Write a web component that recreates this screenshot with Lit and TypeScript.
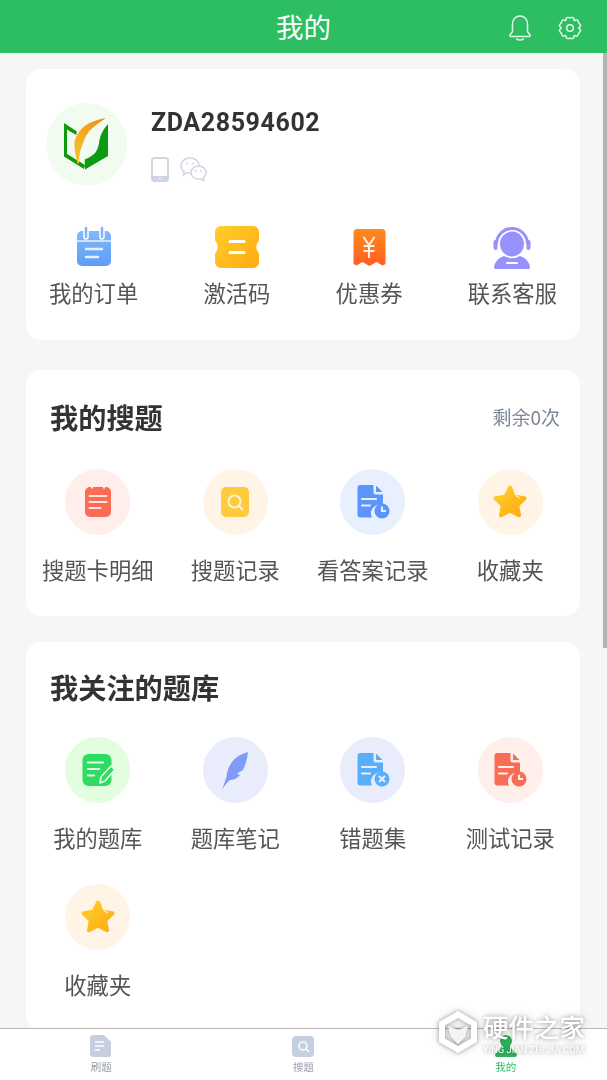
import { LitElement, html, css, svg } from "lit";
import { customElement } from "lit/decorators.js";

const defs = svg`
<defs>
  <linearGradient id="gBlue" x1="0" y1="0" x2="0" y2="1"><stop offset="0" stop-color="#82b8fc"/><stop offset="1" stop-color="#5d9df8"/></linearGradient>
  <linearGradient id="gYel" x1="0" y1="0" x2="1" y2="1"><stop offset="0" stop-color="#ffcf2c"/><stop offset="1" stop-color="#ffaa12"/></linearGradient>
  <linearGradient id="gOr" x1="0" y1="0" x2="0" y2="1"><stop offset="0" stop-color="#ff8a1f"/><stop offset="1" stop-color="#ff5f22"/></linearGradient>
  <linearGradient id="gLeaf" x1="1" y1="0" x2="0" y2="1"><stop offset="0" stop-color="#f08a16"/><stop offset="1" stop-color="#f8c52c"/></linearGradient>
</defs>`;

function gearPath(cx: number, cy: number, rOuter: number, rValley: number): string {
  let d = "";
  for (let i = 0; i < 6; i++) {
    const valley = ((-120 + i * 60) * Math.PI) / 180;
    const tip = ((-90 + i * 60) * Math.PI) / 180;
    const next = ((-60 + i * 60) * Math.PI) / 180;
    const p = (a: number, r: number) => `${(cx + r * Math.cos(a)).toFixed(2)} ${(cy + r * Math.sin(a)).toFixed(2)}`;
    if (i === 0) d += `M${p(valley, rValley)}`;
    d += `C${p(valley + 0.2, rOuter + 1)} ${p(tip - 0.35, rOuter + 1.5)} ${p(tip, rOuter)}`;
    d += `C${p(tip + 0.35, rOuter + 1.5)} ${p(next - 0.2, rOuter + 1)} ${p(next, rValley)}`;
  }
  return d + "z";
}

const ICONS: Record<string, unknown> = {
  order: svg`<svg width="46" height="44" viewBox="0 0 46 44"><rect x="6" y="6" width="34" height="35" rx="5" fill="url(#gBlue)"/>
    <path d="M6 16h34" stroke="#fff" stroke-width="1.5" opacity=".85"/>
    <path d="M15 3v9M31 3v9" stroke="#fff" stroke-width="5.5" stroke-linecap="round"/><path d="M15 3v9M31 3v9" stroke="#7db3fb" stroke-width="2.5" stroke-linecap="round"/>
    <path d="M15 24h16M15 32h12" stroke="#fff" stroke-width="2.4" stroke-linecap="round" opacity=".85"/></svg>`,
  ticket: svg`<svg width="46" height="44" viewBox="0 0 46 44"><path d="M7 1h32a6 6 0 0 1 6 6v8.5q-5.5 6.5 0 13V37a6 6 0 0 1-6 6H7a6 6 0 0 1-6-6v-8.500q5.500-6.500 0-13V7a6 6 0 0 1 6-6z" fill="url(#gYel)"/>
    <path d="M16 16.500h14M16 27.500h14" stroke="#fff" stroke-width="3" stroke-linecap="round"/></svg>`,
  coupon: svg`<svg width="46" height="44" viewBox="0 0 46 44"><path d="M10 4h26a3.500 3.500 0 0 1 3.500 3.500V39l-3 1.500-6-3.500-7 4-7-4-6 3.500-3-1.500V7.500A3.500 3.500 0 0 1 10 4z" fill="url(#gOr)"/>
    <path d="M17.500 12l5.500 8 5.500-8M23 20v13M17.500 21h11M17.500 26h11" stroke="#fff" stroke-width="2" fill="none" opacity=".9"/></svg>`,
  agent: svg`<svg width="46" height="44" viewBox="0 0 46 44">
    <path d="M7.500 19a15.500 15.500 0 0 1 31 0" fill="none" stroke="#9890fd" stroke-width="3"/>
    <rect x="4.500" y="15" width="4" height="10" rx="2" fill="#9890fd"/><rect x="37.500" y="15" width="4" height="10" rx="2" fill="#9890fd"/>
    <ellipse cx="23" cy="19" rx="12" ry="12.500" fill="#9890fd"/>
    <path d="M15 31q8 4.500 16 0q9 3 10 11.500q0 1.500-2 1.500H7q-2 0-2-1.500Q6 34 15 31z" fill="#9890fd"/>
    <path d="M18 38h10" stroke="#fff" stroke-width="2.200" stroke-linecap="round"/></svg>`,
  notebook: svg`<svg width="44" height="44" viewBox="0 0 44 44"><rect x="9" y="7" width="26" height="30" rx="5" fill="#fc6b56"/>
    <path d="M16 5.500v3M28 5.500v3" stroke="#ffeee9" stroke-width="2"/>
    <path d="M13.500 16h17M13.500 22h17M13.500 28h11" stroke="#ffe3dc" stroke-width="2" stroke-linecap="round"/></svg>`,
  search: svg`<svg width="44" height="44" viewBox="0 0 44 44"><rect x="8" y="7" width="28" height="30" rx="5" fill="#ffcb3e"/>
    <circle cx="21.500" cy="21.500" r="6" fill="none" stroke="#fff3cf" stroke-width="2"/><path d="M26 26l3.500 3.500" stroke="#fff3cf" stroke-width="2" stroke-linecap="round"/></svg>`,
  fileClock: svg`<svg width="44" height="44" viewBox="0 0 44 44"><path d="M9.500 5h13v7.500a2 2 0 0 0 2 2H32V25a9 9 0 0 0-11 12.500H9.500a3 3 0 0 1-3-3V8a3 3 0 0 1 3-3zM25 5.500l6.500 6.500H25z" fill="#5b94fb"/>
    <path d="M11 19h14M11 25.500h8" stroke="#e8effe" stroke-width="2.200" stroke-linecap="round"/>
    <circle cx="31" cy="31" r="7.500" fill="#5b94fb"/><path d="M31 26.500V31h4" stroke="#e8effe" stroke-width="2" fill="none"/></svg>`,
  star: svg`<svg width="44" height="44" viewBox="0 0 44 44"><path d="M22 7.500l4.500 9.300 10 1.400-7.300 7.100 1.800 10L22 30.600l-9 4.700 1.800-10-7.300-7.100 10-1.400z" fill="url(#gYel)" stroke="url(#gYel)" stroke-width="4" stroke-linejoin="round"/>
    <path d="M26 11q1 5 6 7" stroke="#fff3d5" stroke-width="1.200" fill="none"/></svg>`,
  note: svg`<svg width="44" height="44" viewBox="0 0 44 44"><rect x="6.500" y="6" width="29" height="32" rx="6" fill="#2fdc63"/>
    <path d="M12 14.500h15M12 21h11M12 27.500h6" stroke="#e2fde0" stroke-width="2.200" stroke-linecap="round"/>
    <path d="M24 35l1-6 10-11 4 3.500-10 11.500z" fill="#2fdc63" stroke="#e2fde0" stroke-width="1.700" stroke-linejoin="round"/></svg>`,
  feather: svg`<svg width="44" height="44" viewBox="0 0 44 44"><path d="M35 4Q24 7 19 14q-5 7-5.500 15L9 42q4-7 8-10 6 0 10-5l-3-1.500 6-3.500q4-8 5-18z" fill="#7f9af7"/></svg>`,
  fileX: svg`<svg width="44" height="44" viewBox="0 0 44 44"><path d="M9.500 5h13v7.500a2 2 0 0 0 2 2H32V25a9 9 0 0 0-11 12.500H9.500a3 3 0 0 1-3-3V8a3 3 0 0 1 3-3zM25 5.500l6.500 6.500H25z" fill="#58aefa"/>
    <path d="M11 19h14M11 25.500h8" stroke="#e9edfb" stroke-width="2.200" stroke-linecap="round"/>
    <circle cx="31" cy="31" r="7.500" fill="#58aefa"/><path d="M28 28l6 6M34 28l-6 6" stroke="#e9edfb" stroke-width="2"/></svg>`,
  fileRed: svg`<svg width="44" height="44" viewBox="0 0 44 44"><path d="M9.500 5h13v7.500a2 2 0 0 0 2 2H32V25a9 9 0 0 0-11 12.500H9.500a3 3 0 0 1-3-3V8a3 3 0 0 1 3-3zM25 5.500l6.500 6.500H25z" fill="#f96d54"/>
    <path d="M11 19h14M11 25.500h8" stroke="#ffeee9" stroke-width="2.200" stroke-linecap="round"/>
    <circle cx="31" cy="31" r="7.500" fill="#f96d54"/><path d="M31 26.500V31h4" stroke="#ffeee9" stroke-width="2" fill="none"/></svg>`,
};

const ACTIONS = [
  ["order", "我的订单"], ["ticket", "激活码"], ["coupon", "优惠券"], ["agent", "联系客服"],
];
const SEARCH = [
  ["notebook", "搜题卡明细", "#ffeee9"], ["search", "搜题记录", "#fff4e6"], ["fileClock", "看答案记录", "#e8f0fe"], ["star", "收藏夹", "#fff4e6"],
];
const BANK = [
  ["note", "我的题库", "#e2fde0"], ["feather", "题库笔记", "#e9edfb"], ["fileX", "错题集", "#e9edfb"], ["fileRed", "测试记录", "#ffeee9"], ["star", "收藏夹", "#fff4e6"],
];

@customElement("app-root")
export class AppRoot extends LitElement {
  static styles = css`
    :host { display: block; width: 607px; height: 1080px; position: relative; overflow: hidden; background: #f5f6f8;
      font-family: "Noto Sans CJK SC", "Noto Sans", sans-serif; color: #555; }
    .defs { position: absolute; width: 0; height: 0; }
    .page { display: flex; flex-direction: column; height: 1080px; filter: blur(0.45px); }
    header { height: 53px; flex: none; background: #2dbe62; display: flex; align-items: center; justify-content: center; position: relative; color: #fff; font-size: 27.5px; box-sizing: border-box; padding-bottom: 2px; }
    .head-icons { position: absolute; right: 25px; top: 14px; display: flex; gap: 27px; }
    main { flex: 1; min-height: 0; overflow: hidden; padding: 16px 27px 0 26px; }
    .card { background: #fff; border-radius: 15px; }
    .c1 { padding: 34px 23px 30px 20px; margin-bottom: 30px; }
    .c2 { padding: 28px 0 30px; margin-bottom: 26px; }
    .c3 { padding: 26px 0 29px; }
    .profile { display: flex; margin-bottom: 39px; }
    .avatar { width: 81px; height: 83px; border-radius: 50%; background: #f2fbf0; display: flex; }
    .info { margin-left: 24px; }
    .name { font-family: Roboto, sans-serif; font-weight: 700; font-size: 25px; line-height: 36px; color: #333; letter-spacing: 0.6px; margin-top: 2px; }
    .binds { display: flex; gap: 11px; margin-top: 16px; }
    .actions { display: flex; justify-content: space-between; padding-left: 3px; }
    .action { display: flex; flex-direction: column; align-items: center; }
    .action svg { display: block; }
    .label { font-size: 22.3px; line-height: 30px; color: #555; white-space: nowrap; margin-bottom: 2px; }
    .action .label { margin-top: 8px; margin-bottom: 3px; }
    .title-row { display: flex; justify-content: space-between; align-items: center; padding: 0 20px 0 24px; }
    .title { font-size: 28.2px; line-height: 38px; font-weight: 700; color: #333; }
    .rest { font-size: 19px; color: #7d8794; margin-bottom: 2px; }
    .grid { display: grid; grid-template-columns: repeat(4, 1fr); row-gap: 30px; padding: 0 1px 0 3px; }
    .c2 .grid { margin-top: 33px; }
    .c3 .grid { margin-top: 31px; }
    .cell { display: flex; flex-direction: column; align-items: center; }
    .circle { width: 65px; height: 66px; border-radius: 50%; display: flex; align-items: center; justify-content: center; margin-bottom: 19px; }
    .label-shift { position: relative; }
    nav { height: 52px; flex: none; background: #fff; border-top: 1.5px solid #b9b9b9; box-sizing: border-box; display: grid; grid-template-columns: repeat(3, 1fr); position: relative; }
    .tab { display: flex; flex-direction: column; align-items: center; padding-top: 6px; font-size: 10.5px; line-height: 13px; color: #9a9fa8; }
    .tab svg { display: block; margin-bottom: 3px; }
    .tab.on { color: #2dbe62; }
    .scroll { position: absolute; right: 0; top: 53px; width: 4px; height: 595px; background: #b3b3b3; }
    .wm { position: absolute; left: 438px; top: 1010px; display: flex; gap: 5px; color: #fff; filter: blur(0.4px) drop-shadow(0 0 2px rgba(0,0,0,.35)) drop-shadow(0 0 5px rgba(0,0,0,.15)); }
    .wm-t { font-size: 25.5px; line-height: 30px; padding-top: 1px; font-weight: 500; }
    .wm-s { font-family: Roboto, sans-serif; font-size: 9.4px; line-height: 13px; white-space: nowrap; margin-top: 2px; }
  `;

  private cell(item: string[]) {
    return html`<div class="cell"><div class="circle" style="background:${item[2]}">${ICONS[item[0]]}</div><div class="label">${item[1]}</div></div>`;
  }

  render() {
    return html`
      <svg class="defs">${defs}</svg>
      <div class="page">
        <header>我的
          <div class="head-icons">
            <svg width="22" height="28" viewBox="0 0 22 28" fill="none" stroke="#dff6e7" stroke-width="1.500" stroke-linejoin="round"><path d="M11 2a7.500 7.500 0 0 0-7.500 7.500v8L1 21q-.5 1.500 1 1.500h18q1.500 0 1-1.500l-2.500-3.500v-8A7.500 7.500 0 0 0 11 2z"/><path d="M7.500 25q3.500 2 7 0" stroke-linecap="round"/></svg>
            <svg width="24" height="28" viewBox="0 0 24 28" fill="none" stroke="#dff6e7" stroke-width="1.500" stroke-linejoin="round"><path d="${gearPath(12, 14, 10.2, 8.6)}"/><circle cx="12" cy="14" r="3.300"/></svg>
          </div>
        </header>
        <main>
          <section class="card c1">
            <div class="profile">
              <div class="avatar">
                <svg width="81" height="83" viewBox="0 0 81 83">
                  <path d="M18 20l13 8.500-1 3.500-9-5.500V51l18 11-1 4-20-12.500z" fill="#0c9a10"/>
                  <path d="M62 21v32l-23 13.500-.3-10q5-1.500 10-6 4-5 4.700-13 1-8 8.600-16.500z" fill="#0c9a10"/>
                  <path d="M60 15q-10 1.500-17.500 5.500Q33 26 29 36q-2 7 2.500 24.500h1.500q0-12 3.500-19Q40 30 47 24.500q6-5 13-9.500z" fill="url(#gLeaf)"/>
                </svg>
              </div>
              <div class="info">
                <div class="name">ZDA28594602</div>
                <div class="binds">
                  <svg width="18" height="25" viewBox="0 0 18 25"><rect x="1" y="1" width="16" height="23" rx="2" fill="#fff" stroke="#cfd6e3" stroke-width="1.800"/><path d="M1 19h16v3a2 2 0 0 1-2 2H3a2 2 0 0 1-2-2z" fill="#cfd6e3"/><circle cx="9" cy="21.500" r="1" fill="#fff"/></svg>
                  <svg width="27" height="25" viewBox="0 0 27 25" fill="#fff" stroke="#cfd6e3" stroke-width="1.500"><path d="M10 1c5 0 9 3 9 7.500S15 16 10 16q-1.500 0-3-.4L3.500 18l.6-3.500Q1 12.500 1 8.500C1 4 5 1 10 1z"/><path d="M18.500 9c4 0 7.500 2.800 7.500 6.500 0 2.200-1 3.800-2.700 5l.6 3-3-1.700q-1.200.3-2.400.3c-4 0-7.500-2.800-7.500-6.500S14.500 9 18.500 9z"/><circle cx="7" cy="6.500" r="1" fill="#cfd6e3" stroke="none"/><circle cx="13" cy="6.500" r="1" fill="#cfd6e3" stroke="none"/><circle cx="16" cy="14" r="1" fill="#cfd6e3" stroke="none"/><circle cx="21" cy="14" r="1" fill="#cfd6e3" stroke="none"/></svg>
                </div>
              </div>
            </div>
            <div class="actions">
              ${ACTIONS.map((a) => html`<div class="action">${ICONS[a[0]]}<div class="label">${a[1]}</div></div>`)}
            </div>
          </section>
          <section class="card c2">
            <div class="title-row"><div class="title">我的搜题</div><div class="rest">剩余0次</div></div>
            <div class="grid">${SEARCH.map((i) => this.cell(i))}</div>
          </section>
          <section class="card c3">
            <div class="title-row"><div class="title">我关注的题库</div></div>
            <div class="grid">${BANK.map((i) => this.cell(i))}</div>
          </section>
        </main>
        <nav>
          <div class="tab"><svg width="22" height="22" viewBox="0 0 22 22"><path d="M3 0h11l7 7v12a3 3 0 0 1-3 3H3a3 3 0 0 1-3-3V3a3 3 0 0 1 3-3z" fill="#c6cfdf"/><path d="M5 7h9M5 11h9M5 15h5" stroke="#fff" stroke-width="1.500"/></svg><span>刷题</span></div>
          <div class="tab"><svg width="22" height="22" viewBox="0 0 22 22"><rect y="1" width="22" height="21" rx="4" fill="#c6cfdf"/><circle cx="11" cy="11" r="4" fill="none" stroke="#fff" stroke-width="1.500"/><path d="M14 14l3 3" stroke="#fff" stroke-width="1.500"/></svg><span>搜题</span></div>
          <div class="tab on"><svg width="22" height="22" viewBox="0 0 22 22"><circle cx="11" cy="6" r="6" fill="#2db55d"/><path d="M7 10h8q1 4 4 6 3 2 3 4 0 2-2 2H2q-2 0-2-2 0-2 3-4 3-2 4-6z" fill="#2db55d"/></svg><span>我的</span></div>
        </nav>
      </div>
      <div class="scroll"></div>
      <div class="wm">
        <svg width="40" height="44" viewBox="0 0 40 44"><path fill-rule="evenodd" d="M20 1l19 11v20L20 43 1 32V12zM20 8L7 15.500v13L20 36l13-7.500v-13z" fill="#fff"/><path d="M10 16l10 4 10-4-3 11-7 7-7-7z" fill="#fff" opacity=".85"/></svg>
        <div><div class="wm-t">硬件之家</div><div class="wm-s">YING JIAN ZHI JIA.COM</div></div>
      </div>
    `;
  }
}
